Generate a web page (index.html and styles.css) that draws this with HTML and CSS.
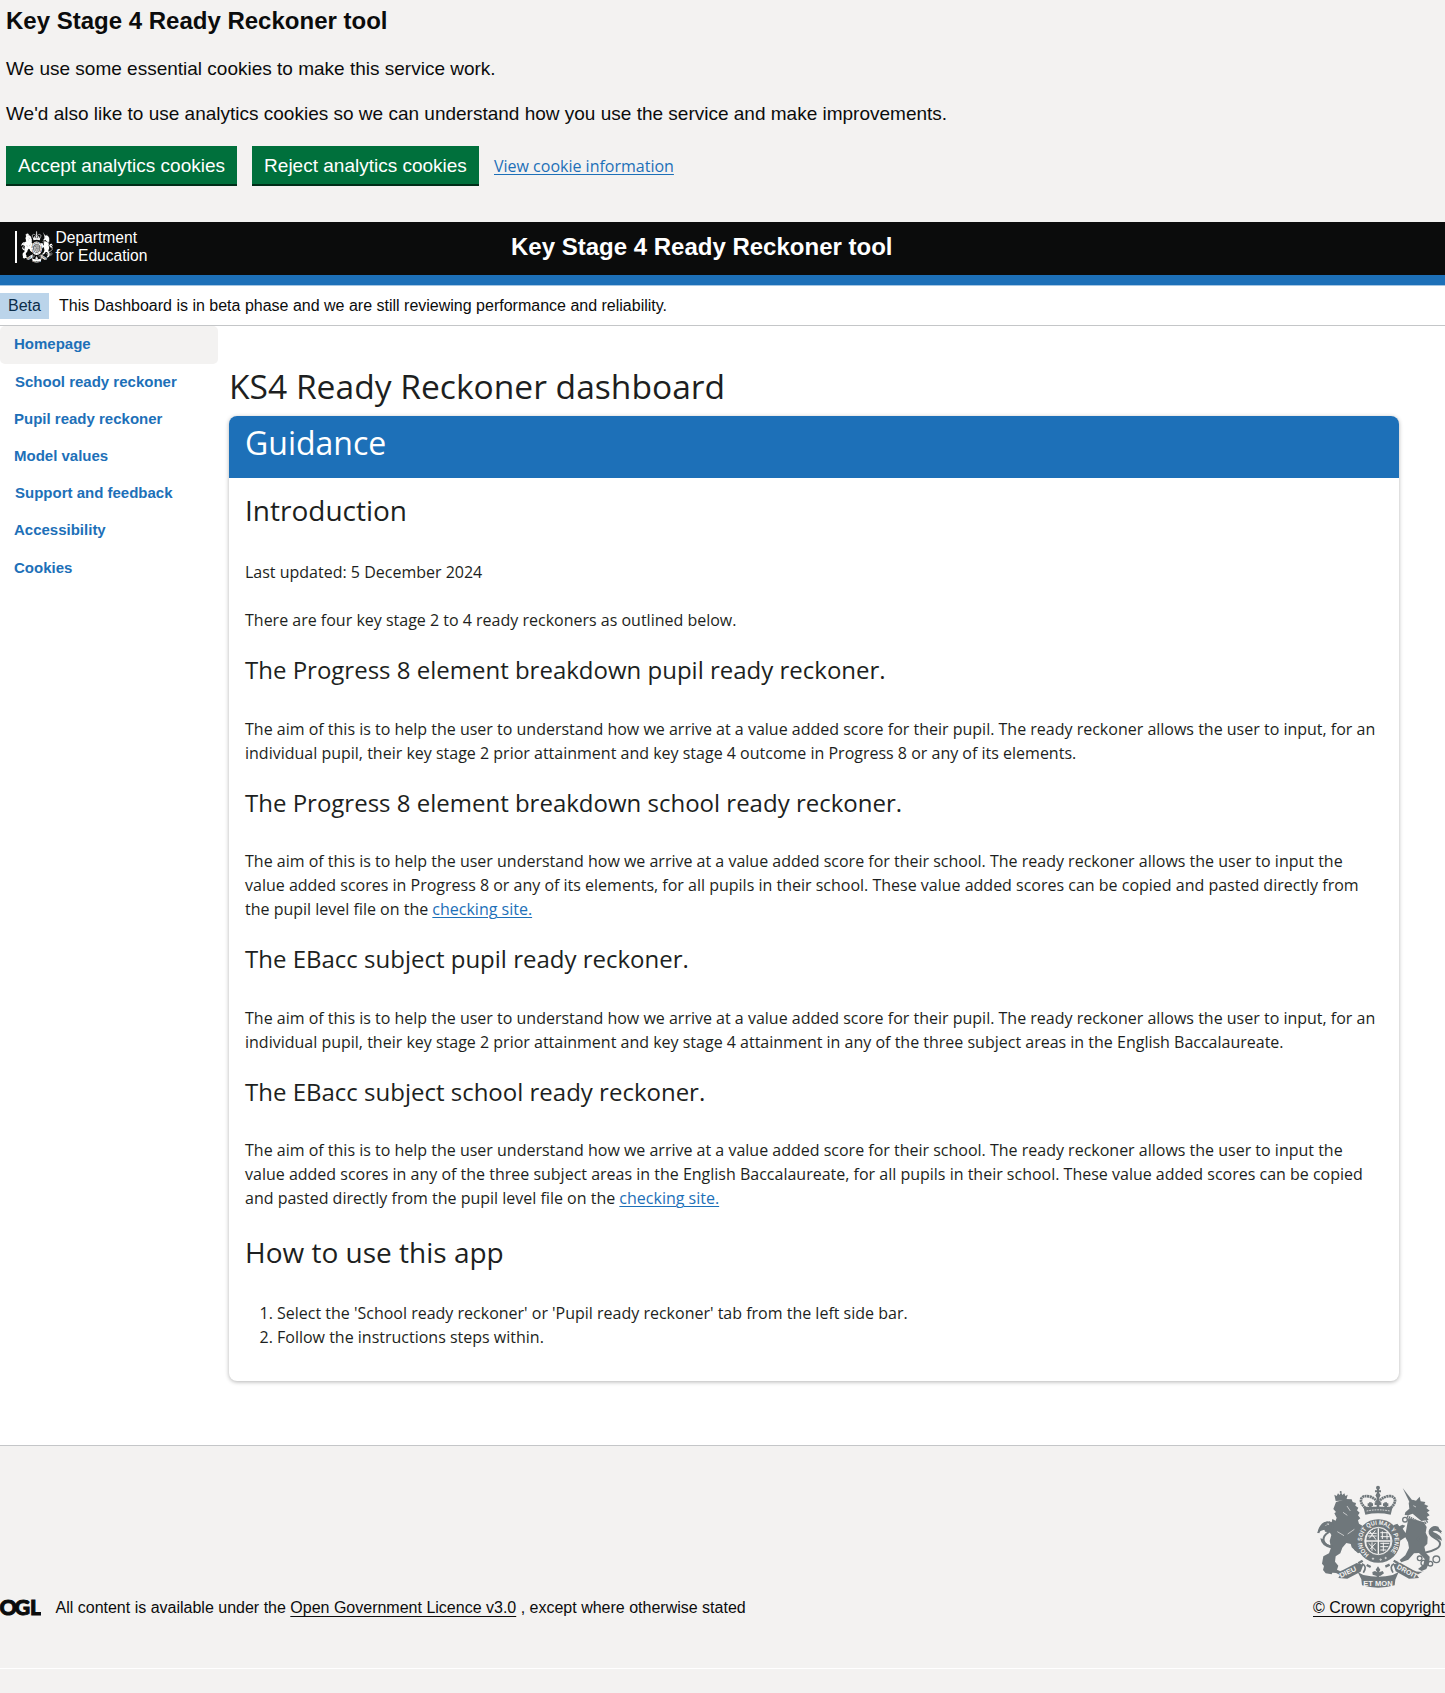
FILE: index.html
```html
<!DOCTYPE html>
<html lang="en">
<head>
<meta charset="utf-8">
<title>Key Stage 4 Ready Reckoner tool</title>
<link rel="stylesheet" href="styles.css">
</head>
<body>
<section class="cookie-banner">
  <h2 class="cookie-title">Key Stage 4 Ready Reckoner tool</h2>
  <p class="cookie-text">We use some essential cookies to make this service work.</p>
  <p class="cookie-text">We'd also like to use analytics cookies so we can understand how you use the service and make improvements.</p>
  <div class="cookie-actions">
    <button class="button accept">Accept analytics cookies</button>
    <button class="button reject">Reject analytics cookies</button>
    <a class="link" href="#">View cookie information</a>
  </div>
</section>

<header class="header">
  <div class="logo">
    <svg class="logo-crest" viewBox="48 45 381 312" preserveAspectRatio="none"><use href="#crest"/></svg>
    <div class="logo-text">Department<br>for Education</div>
  </div>
  <div class="header-title">Key Stage 4 Ready Reckoner tool</div>
</header>

<div class="phase-banner"><strong class="tag">Beta</strong><span>This Dashboard is in beta phase and we are still reviewing performance and reliability.</span></div>

<div class="layout">
  <nav class="nav">
    <a class="nav-item active" href="#">Homepage</a>
    <a class="nav-item inset" href="#">School ready reckoner</a>
    <a class="nav-item" href="#">Pupil ready reckoner</a>
    <a class="nav-item" href="#">Model values</a>
    <a class="nav-item inset" href="#">Support and feedback</a>
    <a class="nav-item" href="#">Accessibility</a>
    <a class="nav-item" href="#">Cookies</a>
  </nav>
  <main class="main">
    <h1 class="page-title">KS4 Ready Reckoner dashboard</h1>
    <article class="card">
      <h2 class="card-header">Guidance</h2>
      <div class="card-body">
        <h3 class="section-title">Introduction</h3>
        <p>Last updated: 5 December 2024</p>
        <p>There are four key stage 2 to 4 ready reckoners as outlined below.</p>
        <h4 class="sub-title">The Progress 8 element breakdown pupil ready reckoner.</h4>
        <p>The aim of this is to help the user to understand how we arrive at a value added score for their pupil. The ready reckoner allows the user to input, for an individual pupil, their key stage 2 prior attainment and key stage 4 outcome in Progress 8 or any of its elements.</p>
        <h4 class="sub-title">The Progress 8 element breakdown school ready reckoner.</h4>
        <p>The aim of this is to help the user understand how we arrive at a value added score for their school. The ready reckoner allows the user to input the value added scores in Progress 8 or any of its elements, for all pupils in their school. These value added scores can be copied and pasted directly from the pupil level file on the <a class="link" href="#">checking site.</a></p>
        <h4 class="sub-title">The EBacc subject pupil ready reckoner.</h4>
        <p>The aim of this is to help the user to understand how we arrive at a value added score for their pupil. The ready reckoner allows the user to input, for an individual pupil, their key stage 2 prior attainment and key stage 4 attainment in any of the three subject areas in the English Baccalaureate.</p>
        <h4 class="sub-title">The EBacc subject school ready reckoner.</h4>
        <p>The aim of this is to help the user understand how we arrive at a value added score for their school. The ready reckoner allows the user to input the value added scores in any of the three subject areas in the English Baccalaureate, for all pupils in their school. These value added scores can be copied and pasted directly from the pupil level file on the <a class="link" href="#">checking site.</a></p>
        <h3 class="section-title last">How to use this app</h3>
        <ol class="steps">
          <li>Select the 'School ready reckoner' or 'Pupil ready reckoner' tab from the left side bar.</li>
          <li>Follow the instructions steps within.</li>
        </ol>
      </div>
    </article>
  </main>
</div>

<footer class="footer">
  <div class="licence">
    <svg class="ogl" width="41" height="20" viewBox="0 0 41 20"><text x="-.4 14.4 30" y="17">OGL</text></svg>
    <span>All content is available under the <a class="footer-link" href="#">Open Government Licence v3.0</a> , except where otherwise stated</span>
  </div>
  <div class="copyright">
    <svg class="footer-crest" width="127" height="104" viewBox="48 45 381 312">
      <g id="crest">
        <g fill="currentColor">
          <!-- crown -->
          <circle cx="234" cy="53" r="6"/><path d="M225 61h18v6h-18zM231 55h6v23h-6z"/><circle cx="234" cy="76" r="7"/>
          <path d="M190 110l88 0-6 24q-38-8-76 0z"/>
          <path d="M196 114C172 92 184 74 206 79c14 3 23 11 28 22 5-11 14-19 28-22 22-5 34 13 10 35" fill="none" stroke="currentColor" stroke-width="8" stroke-dasharray="6 1.5"/>
          <path d="M234 80v32M211 97v17M257 97v17M203 104h16M249 104h16M224 101h20" stroke="currentColor" stroke-width="8"/>
          <!-- lion -->
          <path d="M103 74l7 4 4-8 5 5 4-9 4 9 6-5 3 8 7-4-4 17-32 2z"/><circle cx="122" cy="66" r="3"/>
          <path d="M108 96l30-9 17 1 3 8 10 3-2 8 9 6-4 8 8 7-5 8 7 9-7 6 3 10 10 6-8 14-2 20 5 22-7 22-10-3-12-20-14-3-12 14-6 17-14 9-2 16 10 12-4 12 10 5-7 5-17-1-2 5-18-3-8-10 3-12-6-7 4-22 17-9 6-17-4-20 5-18-5-8-14-2-3-10 9-4-4-9 10 2-1-11 9 4 2-10 10 5 3-9-7-13 5-4-8-9z"/>
          <path d="M100 232C66 226 63 202 84 188c18-12 20-26 4-30-14-3-25 11-33 31" fill="none" stroke="currentColor" stroke-width="6"/>
          <path d="M52 190q4-24 20-33l12-3-8 14 14-4-12 15q-16 0-26 11zM98 236q-34-4-37-31l8 2q8 19 30 20z"/>
          <path d="M150 214l40 9 9 11-5 7-14-7 4 13-10 3-19-18z"/>
          <!-- unicorn -->
          <path d="M308 54l31 40-9 6z"/>
          <path d="M326 98l12-9 10 3 11-12 3 14 14 2-3 7 12 5-6 6 10 8-8 5 8 9-9 5 6 9-22 3-17-14-9-8-13 5-11-1 2-8 12-11z"/>
          <path d="M325 145l46 11 9 15-3 17 6 13-1 20-9 9 4 18 12 12-1 17-9 20-14 6-11-6 16-13 4-17-17-18-15 1-17 19-21 8-5-7 17-14 11-22-3-17-8-15-16 10-14-8-2-9 11 2-15-19 2-13 10-4 6 8 9-5 9 3-8 9 9 13z"/>
          <path d="M374 248c25-4 52-15 45-32-7-14-33-14-30-31 2-14 24-10 35 1" fill="none" stroke="currentColor" stroke-width="6"/>
          <path d="M386 183q9-20 29-13l10 22q-17-15-27-7 27 10 28 27l-20-9q-18-4-20-20z"/>
          <path d="M321 139l48 24 14-10" fill="none" stroke="currentColor" stroke-width="8" stroke-dasharray="4 2"/>
          <g fill="none" stroke="currentColor" stroke-width="4"><circle cx="315" cy="149" r="7"/><circle cx="359" cy="265" r="7"/><circle cx="371" cy="279" r="8"/><circle cx="391" cy="281" r="7"/><circle cx="409" cy="268" r="10"/><circle cx="357" cy="207" r="5"/></g>
          <!-- garter -->
          <circle cx="235" cy="213" r="53" fill="none" stroke="currentColor" stroke-width="25"/>
          <ellipse cx="235" cy="213" rx="36" ry="39"/>
          <!-- ribbons -->
          <path d="M95 302q15 8 34-2l41-21 20 5-8 21-40 21-27-2 5-9z"/>
          <path d="M373 302q-15 8-34-2l-39-22-20 5 7 21 40 22 30-2-6-9z"/>
          <path d="M173 306l17 9q46 10 88 0l18-9-10 23-2 17q-50 14-98 0l-2-18z"/>
          <path d="M186 281q17 8 4 27M282 281q-15 8-3 27" fill="none" stroke="currentColor" stroke-width="5"/>
          <path d="M234 289l7 10-4 8 11-4 4 7-10 7-5 1v7h-7v-7l-12-4-1-8 8-3 7 4-5-8z"/>
          <path d="M188 272l-13 8M281 272l14 8M200 285l12 6M269 284l-13 6" stroke="currentColor" stroke-width="7"/>
        </g>
        <g class="crest-cut" fill="none" stroke-width="2.5">
          <circle cx="235" cy="213" r="41"/>
          <path d="M235 175v77M198 213h74" stroke-width="4"/>
          <path d="M205 190h25M203 198h27M208 183l20 26M226 181l-18 24M241 188h23M242 200h27M247 184v23M261 187v21M206 220l22 22M227 219l-16 18M216 217v25M241 220h27M241 230h24M241 240h18M250 218v26" stroke-width="3"/>
          <path d="M141 108l10 15M129 127l13 9M112 185l20 12M163 178l-20 14M340 107l8 4" stroke-width="2"/>
          <path d="M200 123q34-7 70 0" stroke-dasharray="5 3"/>
          <circle cx="219" cy="266" r="2"/><circle cx="242" cy="269" r="2"/><circle cx="257" cy="264" r="2"/>
        </g>
        <path id="motto" d="M207 253A49 49 0 1 1 266 251" fill="none"/>
        <g class="crest-text">
          <text font-size="19"><textPath href="#motto" textLength="236" lengthAdjust="spacingAndGlyphs">HONI SOIT QUI MAL Y PENSE</textPath></text>
          <text font-size="21" transform="translate(122 324) rotate(-25)" textLength="54" lengthAdjust="spacingAndGlyphs">DIEU</text>
          <text font-size="23" x="190" y="348" textLength="88" lengthAdjust="spacingAndGlyphs">ET MON</text>
          <text font-size="21" transform="translate(289 295) rotate(28)" textLength="66" lengthAdjust="spacingAndGlyphs">DROIT</text>
        </g>
      </g>
    </svg>
    <a class="footer-link" href="#">© Crown copyright</a>
  </div>
</footer>
<div class="footer-end"></div>
</body>
</html>
```
FILE: styles.css
```css
* { box-sizing: border-box; }
body {
  margin: 0;
  background: #fff;
  color: #1d1f21;
  font: 16px/24px "Open Sans", sans-serif;
  overflow-x: hidden;
}
h1, h2, h3, h4, p, ol { margin: 0; font-weight: 400; }
.link { color: #1d70b8; text-decoration: underline; text-decoration-thickness: 1px; text-underline-offset: 2px; }

.cookie-banner, .header, .phase-banner, .nav, .footer { font-family: "Liberation Sans", Arial, sans-serif; }

.cookie-banner { height: 222px; padding: 6px 6px 0; background: #f3f2f1; color: #0b0c0c; }
.cookie-title { font-size: 24px; line-height: 30px; font-weight: 700; margin-bottom: 20px; }
.cookie-text { font-size: 19px; line-height: 25px; margin-bottom: 20px; }
.cookie-actions { display: flex; align-items: center; gap: 15px; height: 38px; font-family: "Open Sans", sans-serif; }
.cookie-actions .link { padding-top: 2px; }
.button {
  height: 38px;
  padding: 2px 0 0;
  border: 0;
  background: #00703c;
  box-shadow: 0 2px 0 #002d18;
  color: #fff;
  font: 19px/36px "Liberation Sans", Arial, sans-serif;
}
.accept { width: 231px; }
.reject { width: 227px; }

.header { display: flex; height: 63px; margin-bottom: 1px; background: #0b0c0c; border-bottom: 10px solid #1d70b8; box-shadow: 0 1px 0 #a5c6e3; color: #fff; }
.logo { display: flex; width: 511px; padding: 9px 0 0 15px; }
.logo-crest { width: 38px; height: 32px; padding-left: 4px; border-left: 2px solid #fff; --cut: #0b0c0c; }
.logo-text { margin-left: 2.5px; margin-top: -2px; font-size: 15.6px; line-height: 17.5px; }
.header-title { font-size: 24px; line-height: 50px; font-weight: 700; }
.crest-cut { stroke: var(--cut); }
.crest-text { fill: var(--cut); font-family: "Liberation Sans", Arial, sans-serif; font-weight: 700; }

.phase-banner { display: flex; align-items: center; gap: 10px; height: 40px; border-bottom: 1px solid #c4c6c8; color: #0b0c0c; line-height: 20px; }
.tag { width: 49px; height: 26px; padding-left: 8px; background: #bbd4ea; color: #0c2d4a; font-weight: 400; line-height: 25px; }

.layout { display: flex; height: 1119px; }
.nav { width: 218px; padding-top: .4px; }
.nav-item { display: block; height: 37.2px; padding-left: 14px; border-radius: 5px; color: #1d70b8; font-size: 15px; line-height: 36px; font-weight: 700; text-decoration: none; }
.nav-item.inset { padding-left: 15px; }
.active { background: #f3f2f1; }
.main { width: 1170px; margin-left: 11px; }
.page-title { font-size: 33.6px; line-height: 41px; margin-top: 40px; margin-bottom: 9px; }
.card { height: 965px; border-radius: 8px; box-shadow: 0 1px 4px rgba(0, 0, 0, .3); overflow: hidden; }
.card-header { height: 62px; padding-left: 16px; background: #1d70b8; color: #fff; font-size: 32px; line-height: 54px; }
.card-body { padding: 15px 16px; }
.card-body p { margin-bottom: 24px; }
.section-title { font-size: 28px; line-height: 34px; margin-bottom: 33px; }
.section-title.last { padding-top: .7px; margin-bottom: 31.5px; }
.sub-title { font-size: 24px; line-height: 28.8px; margin-bottom: 31.8px; }
.steps { padding-left: 32px; }

.footer { display: flex; justify-content: space-between; align-items: flex-end; height: 223px; padding-bottom: 50px; background: #f3f2f1; border-top: 1px solid #c4c6c8; color: #0b0c0c; line-height: 20px; }
.licence { display: flex; gap: 14.5px; }
.ogl text { font: 900 21.5px Lato, sans-serif; fill: #0b0c0c; stroke: #0b0c0c; stroke-width: 1px; }
.copyright { display: flex; flex-direction: column; width: 132px; white-space: nowrap; }
.footer-crest { margin: 0 0 9px 3px; color: #6f777b; --cut: #f3f2f1; }
.footer-link { color: inherit; text-decoration: underline; text-decoration-thickness: 1px; text-underline-offset: 3px; }
.footer-end { height: 25px; border-top: 1px solid #fff; background: #f3f2f1; }
```
